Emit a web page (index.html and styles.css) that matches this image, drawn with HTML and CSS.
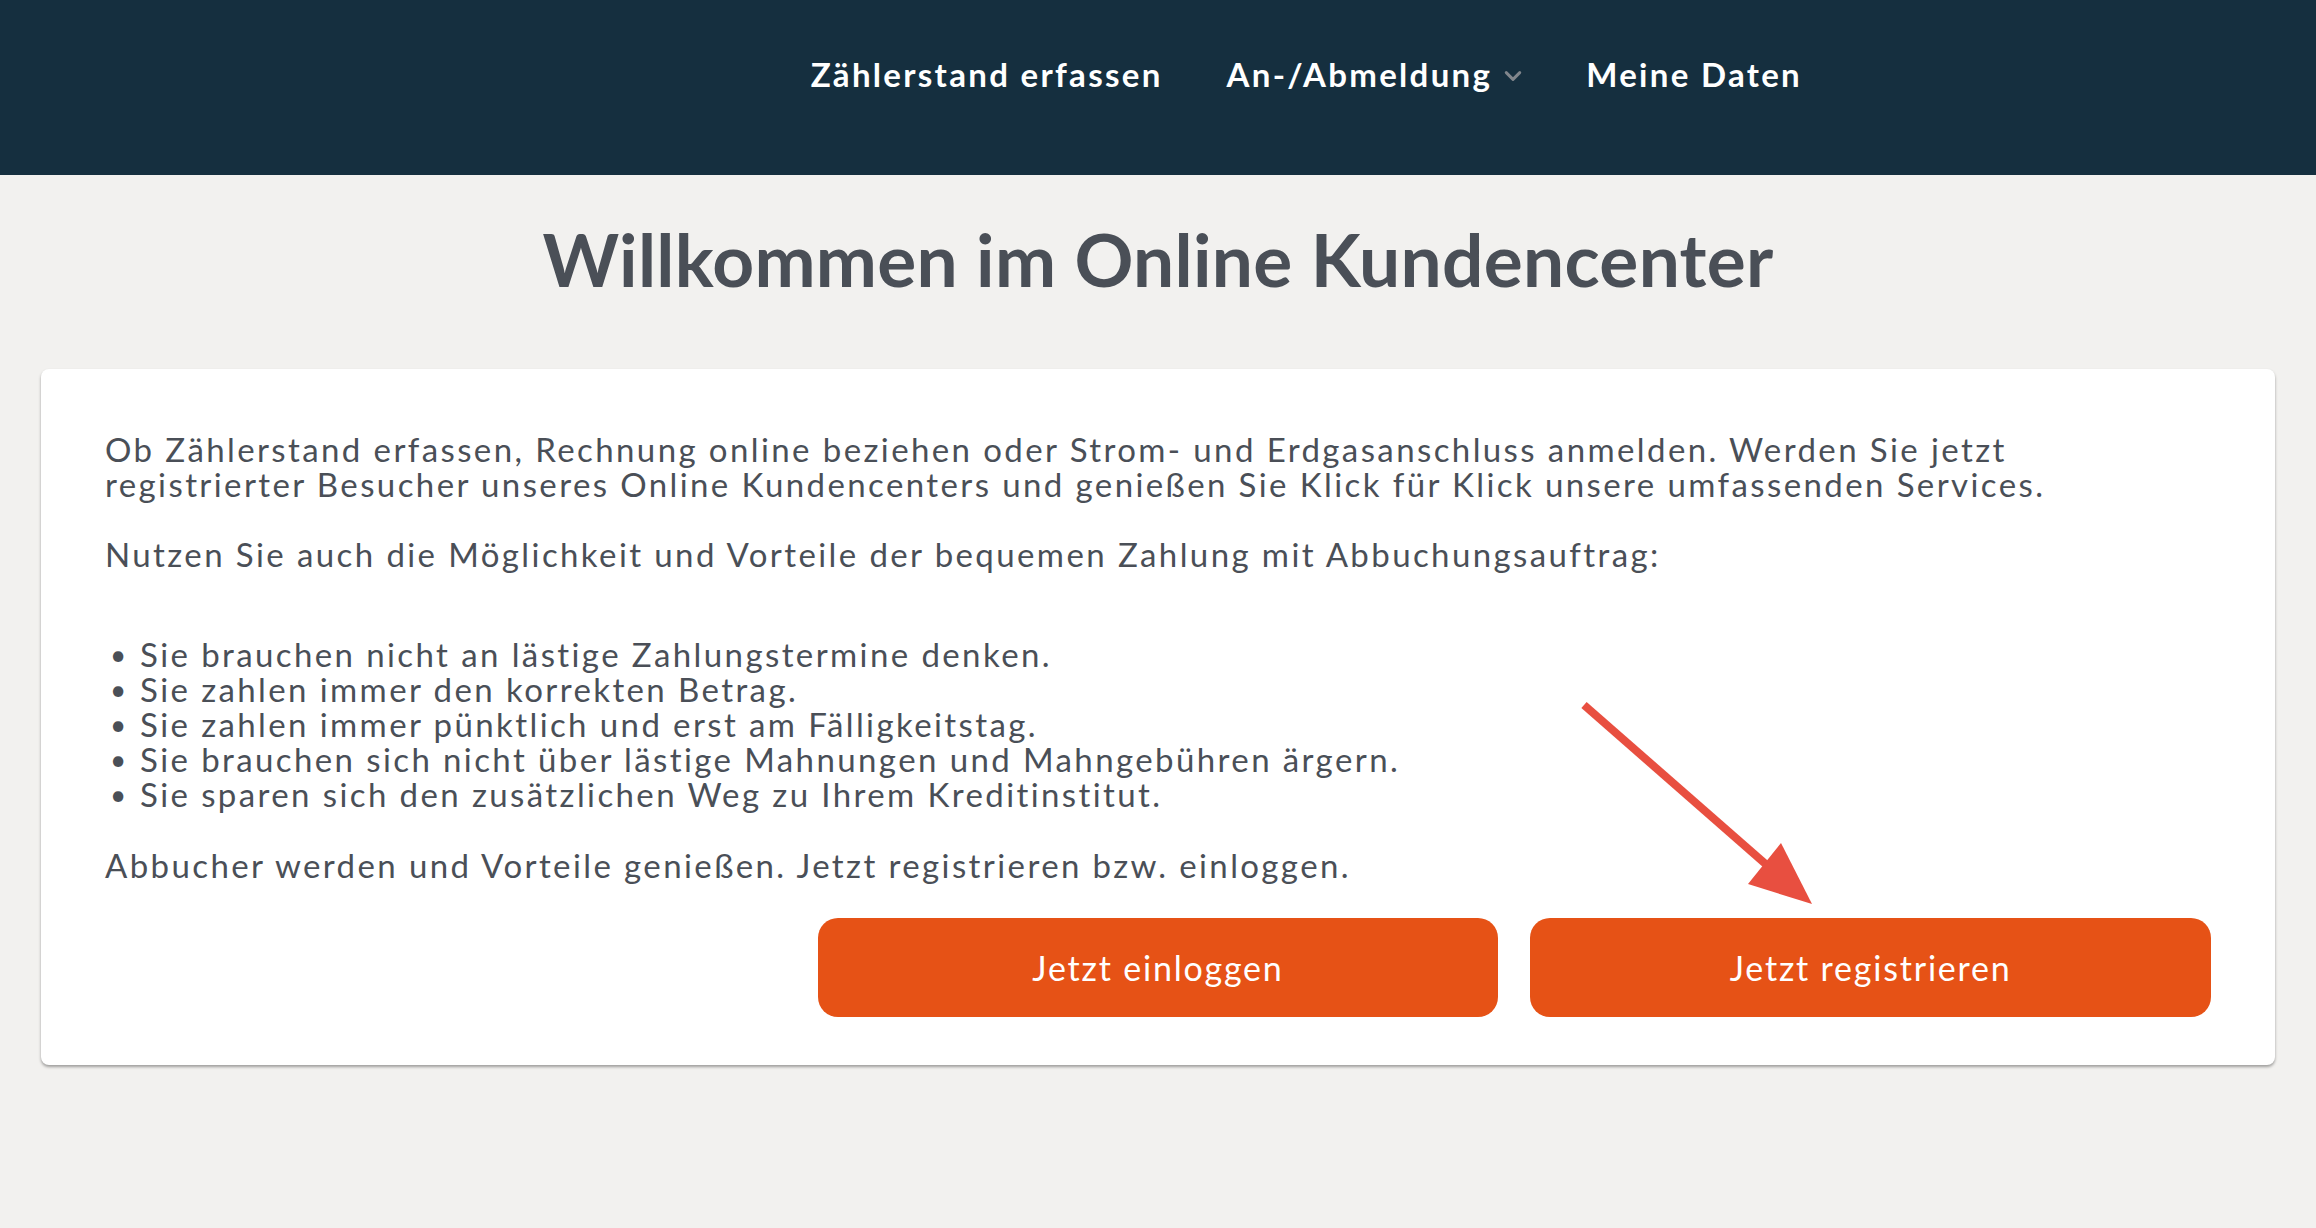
FILE: index.html
```html
<!DOCTYPE html>
<html lang="de">
<head>
<meta charset="utf-8">
<title>Online Kundencenter</title>
<link rel="stylesheet" href="styles.css">
</head>
<body>
<header class="topbar">
  <nav class="mainnav">
    <a class="nav-link" href="#">Zählerstand erfassen</a>
    <a class="nav-link has-dropdown" href="#">An-/Abmeldung<svg class="chev" viewBox="0 0 16 10" aria-hidden="true"><path d="M2 2 L8 8 L14 2" fill="none" stroke="currentColor" stroke-width="2.6" stroke-linecap="round" stroke-linejoin="round"/></svg></a>
    <a class="nav-link" href="#">Meine Daten</a>
  </nav>
</header>
<main class="page">
  <h1 class="page-title">Willkommen im Online Kundencenter</h1>
  <section class="card">
    <p class="text">Ob Zählerstand erfassen, Rechnung online beziehen oder Strom- und Erdgasanschluss anmelden. Werden Sie jetzt<br>registrierter Besucher unseres Online Kundencenters und genießen Sie Klick für Klick unsere umfassenden Services.</p>
    <p class="text">Nutzen Sie auch die Möglichkeit und Vorteile der bequemen Zahlung mit Abbuchungsauftrag:</p>
    <ul class="benefits">
      <li>Sie brauchen nicht an lästige Zahlungstermine denken.</li>
      <li>Sie zahlen immer den korrekten Betrag.</li>
      <li>Sie zahlen immer pünktlich und erst am Fälligkeitstag.</li>
      <li>Sie brauchen sich nicht über lästige Mahnungen und Mahngebühren ärgern.</li>
      <li>Sie sparen sich den zusätzlichen Weg zu Ihrem Kreditinstitut.</li>
    </ul>
    <p class="text">Abbucher werden und Vorteile genießen. Jetzt registrieren bzw. einloggen.</p>
    <div class="actions">
      <a class="btn btn-login" href="#">Jetzt einloggen</a>
      <a class="btn btn-register" href="#">Jetzt registrieren</a>
    </div>
    <svg class="annotation-arrow" viewBox="0 0 260 230" aria-hidden="true">
      <line x1="13" y1="16" x2="198" y2="178" stroke="#e84f40" stroke-width="8" stroke-linecap="butt"/>
      <polygon points="241,215 210,154 177,195" fill="#e84f40"/>
    </svg>
  </section>
</main>
</body>
</html>
```
FILE: styles.css
```css
* { box-sizing: border-box; }

html, body {
  margin: 0;
  padding: 0;
}

body {
  background: #f2f1ef;
  font-family: "Lato", "Liberation Sans", sans-serif;
  color: #4a4f57;
  min-height: 1228px;
}

.topbar {
  background: #152f3f;
  height: 175px;
  display: flex;
  justify-content: flex-end;
  align-items: flex-start;
  padding: 52px 482px 0 0;
}

.mainnav {
  display: flex;
  align-items: center;
}

.nav-link {
  color: #ffffff;
  text-decoration: none;
  font-weight: 700;
  font-size: 33px;
  letter-spacing: 2.3px;
  line-height: 44px;
  padding: 0 32px;
  display: flex;
  align-items: center;
}

.chev {
  width: 18px;
  height: 12px;
  margin-left: 12px;
  margin-top: 4px;
  color: #80868c;
}

.page {
  padding: 0 41px;
}

.page-title {
  margin: 0;
  text-align: center;
  font-size: 73px;
  font-weight: 700;
  letter-spacing: 0.3px;
  line-height: 90px;
  padding: 39px 0 65px;
  color: #4a4f57;
}

.card {
  position: relative;
  background: #ffffff;
  border-radius: 8px;
  box-shadow: 0 2px 3px rgba(0, 0, 0, 0.35);
  padding: 63px 64px 48px;
  font-size: 33px;
  letter-spacing: 2.4px;
  line-height: 35px;
}

.text {
  margin: 0 0 35px;
}

.benefits {
  list-style: none;
  margin: 65px 0 36px;
  padding: 0;
}

.benefits li {
  display: flex;
}

.benefits li::before {
  content: "•";
  width: 30px;
  padding-left: 5px;
  font-size: 28px;
  letter-spacing: 0;
  flex: none;
}

.actions {
  display: grid;
  grid-template-columns: repeat(3, 1fr);
  gap: 32px;
}

.btn {
  display: flex;
  align-items: center;
  justify-content: center;
  height: 99px;
  border-radius: 20px;
  background: #e65216;
  color: #ffffff;
  text-decoration: none;
  font-size: 34px;
  letter-spacing: 1.8px;
}

.btn-login {
  grid-column: 2;
}

.btn-register {
  grid-column: 3;
}

.annotation-arrow {
  position: absolute;
  left: 1530px;
  top: 320px;
  width: 260px;
  height: 230px;
}
```
